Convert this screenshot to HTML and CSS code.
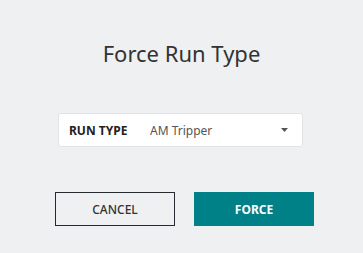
FILE: index.html
```html
<!DOCTYPE html>
<html lang="en">
<head>
    <meta charset="UTF-8">
    <meta name="viewport" content="width=device-width, initial-scale=1.0">
    <title>Force Run Type</title>
    <link rel="stylesheet" href="styles.css">
</head>
<body>
    <div class="dialog">
        <h1 class="dialog-title">Force Run Type</h1>

        <div class="field">
            <span class="field-label">RUN TYPE</span>
            <span class="field-value">AM Tripper</span>
            <svg class="field-arrow" width="7" height="4" viewBox="0 0 7 4">
                <path d="M0 0 H7 L3.5 4 Z" fill="#555"/>
            </svg>
        </div>

        <div class="actions">
            <button class="btn btn-cancel">CANCEL</button>
            <button class="btn btn-force">FORCE</button>
        </div>
    </div>
</body>
</html>
```

FILE: styles.css
```css
body {
    margin: 0;
    background-color: #eff0f2;
    font-family: "Noto Sans", "Open Sans", sans-serif;
    color: #333;
}
.dialog {
    width: 363px;
    height: 253px;
    display: flex;
    flex-direction: column;
    align-items: center;
    box-sizing: border-box;
    padding-top: 38px;
}
.dialog-title {
    margin: 0;
    font-size: 22px;
    font-weight: 400;
    line-height: 30px;
    color: #333;
}
.field {
    margin-top: 45px;
    margin-right: 2px;
    width: 245px;
    height: 34px;
    box-sizing: border-box;
    background-color: #fff;
    border: 1px solid #e2e3e5;
    border-radius: 3px;
    display: flex;
    align-items: center;
    padding: 0 14px 0 10px;
}
.field-label {
    font-size: 12px;
    font-weight: 700;
    color: #222;
    width: 81px;
}
.field-value {
    font-size: 12px;
    color: #555;
    flex: 1;
}
.actions {
    margin-top: 45px;
    margin-left: 6px;
    display: flex;
    gap: 19px;
}
.btn {
    width: 120px;
    height: 34px;
    font-family: inherit;
    font-size: 12px;
    border-radius: 0;
    cursor: pointer;
}
.btn-cancel {
    background-color: transparent;
    border: 1px solid #262a31;
    color: #333;
    font-weight: 500;
}
.btn-force {
    background-color: #008087;
    border: none;
    color: #fff;
    font-weight: 700;
}
```
